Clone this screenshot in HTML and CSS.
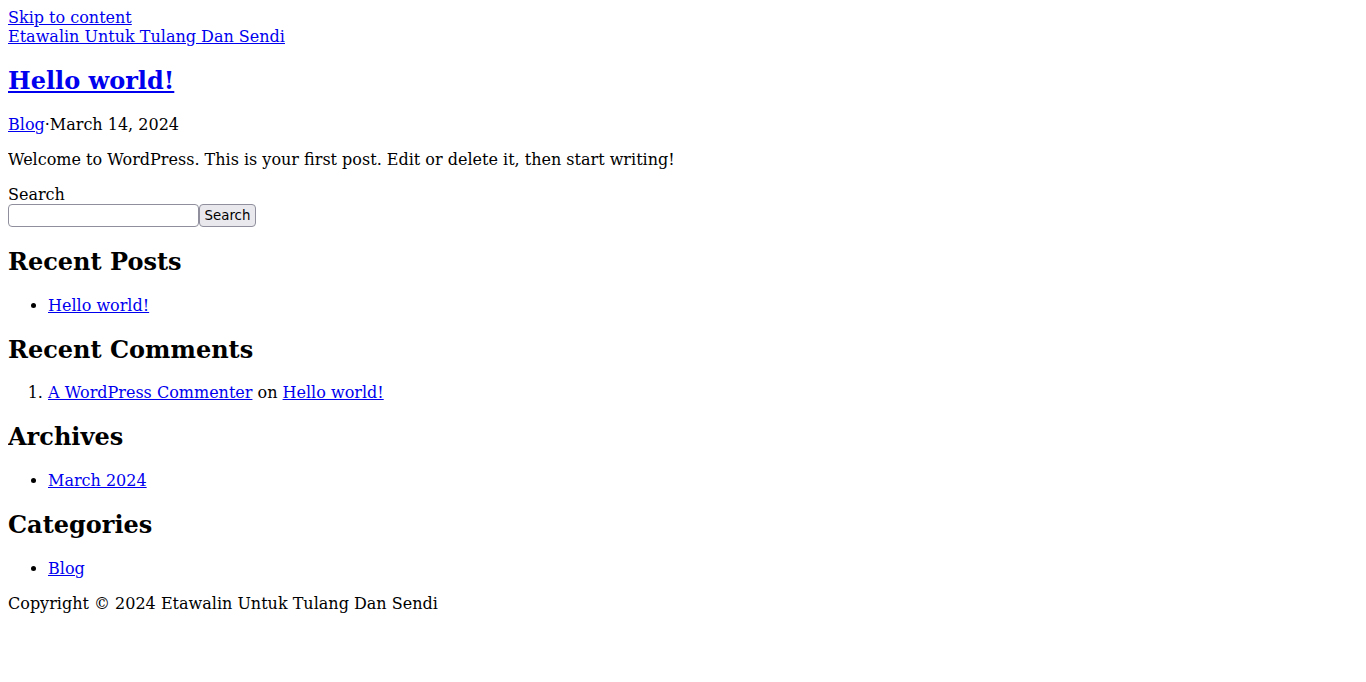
FILE: index.html
```html
<!DOCTYPE html>
<html lang="en-US">
<head>
<meta charset="UTF-8">
<title>Etawalin Untuk Tulang Dan Sendi</title>
<link rel="stylesheet" href="styles.css">
</head>
<body class="page">
<a class="skip-link" href="#content">Skip to content</a>
<header class="site-header">
  <div class="site-title"><a href="#">Etawalin Untuk Tulang Dan Sendi</a></div>
</header>
<main id="content" class="site-main">
  <article class="post">
    <h2 class="entry-title"><a href="#">Hello world!</a></h2>
    <p class="entry-meta"><a href="#">Blog</a>·March 14, 2024</p>
    <p class="entry-summary">Welcome to WordPress. This is your first post. Edit or delete it, then start writing!</p>
  </article>
</main>
<aside class="sidebar">
  <form class="search-form" role="search">
    <label class="search-label" for="s">Search</label>
    <div class="search-row"><input id="s" class="search-input" type="search"><button class="search-button" type="submit">Search</button></div>
  </form>
  <section class="widget">
    <h2 class="widget-title">Recent Posts</h2>
    <ul class="widget-list"><li><a href="#">Hello world!</a></li></ul>
  </section>
  <section class="widget">
    <h2 class="widget-title">Recent Comments</h2>
    <ol class="widget-list"><li><a href="#">A WordPress Commenter</a> on <a href="#">Hello world!</a></li></ol>
  </section>
  <section class="widget">
    <h2 class="widget-title">Archives</h2>
    <ul class="widget-list"><li><a href="#">March 2024</a></li></ul>
  </section>
  <section class="widget">
    <h2 class="widget-title">Categories</h2>
    <ul class="widget-list"><li><a href="#">Blog</a></li></ul>
  </section>
</aside>
<footer class="site-footer">
  <p class="copyright">Copyright © 2024 Etawalin Untuk Tulang Dan Sendi</p>
</footer>
</body>
</html>
```
FILE: styles.css
```css
.page {
  font-family: "DejaVu Serif", serif;
  font-size: 16px;
  color: #000;
  background: #fff;
}
.skip-link { display: inline; }
.search-label { display: block; }
.search-form { margin: 0; }
.search-row {
  display: flex;
  height: 23px;
}
.search-input {
  box-sizing: border-box;
  width: 191px;
  height: 23px;
  margin: 0;
  padding: 0 4px;
  border: 1px solid #8f8f9d;
  border-radius: 4px;
  background: #fff;
  font: 13.33px "DejaVu Sans", sans-serif;
}
.search-button {
  box-sizing: border-box;
  width: 57px;
  height: 23px;
  margin: 0;
  padding: 0 4px;
  border: 1px solid #8f8f9d;
  border-radius: 4px;
  background: #e9e9ed;
  color: #000;
  font: 13.33px "DejaVu Sans", sans-serif;
}
```
